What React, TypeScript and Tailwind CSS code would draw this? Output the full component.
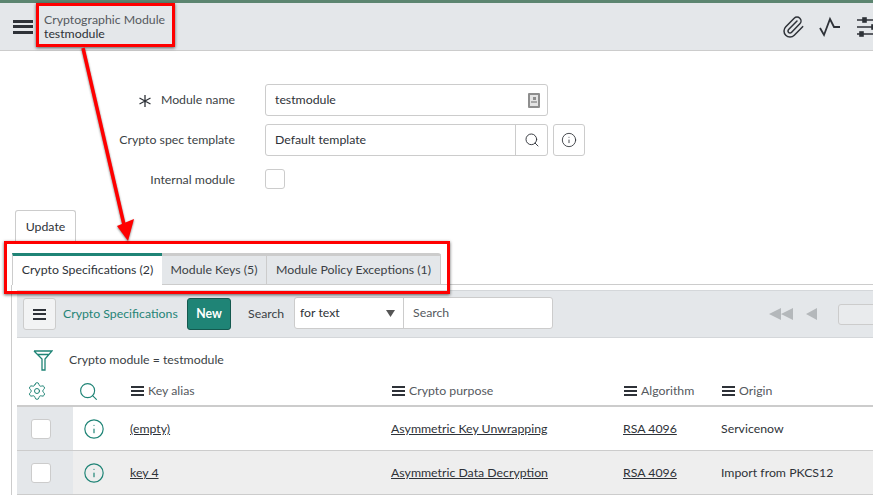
import { Paperclip, Search, Info, Settings } from 'lucide-react';

const ROWS = [
  { alias: '(empty)', purpose: 'Asymmetric Key Unwrapping', algorithm: 'RSA 4096', origin: 'Servicenow', bg: 'bg-white' },
  { alias: 'key 4', purpose: 'Asymmetric Data Decryption', algorithm: 'RSA 4096', origin: 'Import from PKCS12', bg: 'bg-[#eeeeee]' },
];

const COLUMNS = 'grid grid-cols-[56px_57px_261px_232px_98px_1fr]';

function Bars({ className }: { className: string }) {
  return (
    <span className={`flex flex-col justify-between ${className}`}>
      <span className="h-[2px] bg-[#2e3238]" />
      <span className="h-[2px] bg-[#2e3238]" />
      <span className="h-[2px] bg-[#2e3238]" />
    </span>
  );
}

function ColumnHead({ label }: { label: string }) {
  return (
    <div className="flex items-center gap-[4px] pl-px text-[#55595e]">
      <Bars className="h-[10px] w-[13px]" />
      <span>{label}</span>
    </div>
  );
}

function FormLabel({ children }: { children: React.ReactNode }) {
  return <div className="flex w-[235px] items-center justify-end pt-px text-[#3b3f45]">{children}</div>;
}

export default function App() {
  return (
    <div className="relative h-[498px] w-[873px] overflow-hidden bg-white font-['Lato','Noto_Sans',sans-serif] text-[12.3px] text-[#2e3238]">
      <div className="h-[3px] bg-[#5c8570]" />
      <header className="flex h-[48px] items-center border-b border-[#cccccc] bg-[#e4e7ea]">
        <Bars className="ml-[13px] h-[14px] w-[20px] [&>span]:h-[3px]" />
        <div className="ml-[11px] leading-[14px]">
          <div className="text-[#55595e]">Cryptographic Module</div>
          <div>testmodule</div>
        </div>
        <div className="ml-auto flex items-center">
          <Paperclip className="mr-[14px] h-[24px] w-[24px]" strokeWidth={1.5} />
          <svg className="mr-[16px] h-[22px] w-[22px]" viewBox="0 0 22 22" fill="none" stroke="#2e3238" strokeWidth="1.8">
            <path d="M1 12 L5 19 L11 3 L15 11 L21 11" />
          </svg>
          <svg className="-mr-[6px] h-[22px] w-[22px]" viewBox="0 0 22 22" fill="none" stroke="#2e3238" strokeWidth="1.6">
            <path d="M0 4H22M0 11H22M0 18H22" />
            <rect x="6" y="2" width="3" height="4" fill="#2e3238" />
            <rect x="15" y="9" width="3" height="4" fill="#2e3238" />
            <rect x="3" y="16" width="3" height="4" fill="#2e3238" />
          </svg>
        </div>
      </header>

      <form className="mt-[33px] flex flex-col">
        <div className="flex h-[32px] items-center">
          <FormLabel>
            <svg className="mr-[9px] h-[14px] w-[14px]" viewBox="0 0 14 14" fill="none" stroke="#2e3238" strokeWidth="1.3">
              <path d="M7 1V13M1.5 4L12.5 10M12.5 4L1.5 10" />
            </svg>
            Module name
          </FormLabel>
          <div className="ml-[30px] flex h-[32px] w-[283px] items-center rounded-[3px] border border-[#cccccc] pr-[7px] pl-[9px]">
            <span className="flex-1 pt-px">testmodule</span>
            <span className="flex h-[15px] w-[12px] flex-col items-center justify-center gap-px rounded-[1px] border-2 border-[#8e8e8e] bg-[#e4e4e4]">
              <span className="h-[3px] w-[3px] bg-[#8e8e8e]" />
              <span className="h-[2px] w-[6px] bg-[#a8a8a8]" />
            </span>
          </div>
        </div>
        <div className="mt-[8px] flex h-[32px] items-center">
          <FormLabel>Crypto spec template</FormLabel>
          <div className="ml-[30px] flex h-[32px] w-[283px] items-center rounded-[3px] border border-[#cccccc] pl-[9px]">
            <span className="flex-1 pt-px">Default template</span>
            <span className="flex h-full w-[32px] items-center justify-center border-l border-[#cccccc]">
              <Search className="h-[16px] w-[16px]" strokeWidth={1.4} />
            </span>
          </div>
          <span className="ml-[5px] flex h-[32px] w-[32px] items-center justify-center rounded-[3px] border border-[#cccccc]">
            <Info className="h-[16px] w-[16px]" strokeWidth={1.3} />
          </span>
        </div>
        <div className="mt-[13px] flex h-[20px] items-center">
          <FormLabel>
            <span className="pt-px">Internal module</span>
          </FormLabel>
          <span className="ml-[30px] h-[20px] w-[20px] rounded-[3px] border border-[#cccccc]" />
        </div>
      </form>

      <div className="mt-[21px] ml-[15px] flex h-[33px] w-[61px] items-center justify-center rounded-t-[3px] border border-b-0 border-[#cccccc]">
        Update
      </div>

      <div className="mt-[10px] flex h-[32px] pl-[12px]">
        <div className="flex w-[150px] items-center justify-center border-t-[3px] border-l border-[#1f8476] border-l-[#cccccc]">
          Crypto Specifications (2)
        </div>
        <div className="flex w-[105px] items-center justify-center border-t-[3px] border-r border-b border-[#cccccc] bg-[#e4e7ea] text-[#3b3f45]">
          Module Keys (5)
        </div>
        <div className="flex w-[174px] items-center justify-center rounded-tr-[3px] border-t-[3px] border-r border-b border-[#cccccc] bg-[#e4e7ea] text-[#3b3f45]">
          Module Policy Exceptions (1)
        </div>
        <div className="flex-1 border-b border-[#cccccc]" />
      </div>

      <div className="ml-[11px] border-l border-[#cccccc] pt-[5px] pl-[5px]">
        <div className="flex h-[48px] items-center border-y border-[#d4d7da] bg-[#e4e7ea] pl-[6px]">
          <span className="flex h-[32px] w-[33px] items-center justify-center rounded-[3px] border border-[#cccccc] bg-[#f2f3f4]">
            <Bars className="h-[11px] w-[13px]" />
          </span>
          <span className="ml-[7px] w-[124px] text-[#1f8476]">Crypto Specifications</span>
          <span className="flex h-[32px] w-[44px] items-center justify-center rounded-[3px] border border-[#14594f] bg-[#1f8476] font-bold text-white">
            New
          </span>
          <span className="ml-[17px] w-[46px] text-[#3b3f45]">Search</span>
          <div className="-mt-[2px] flex h-[32px] w-[259px] rounded-[3px] border border-[#cccccc] bg-white">
            <span className="flex w-[109px] items-center justify-between border-r border-[#cccccc] pr-[8px] pl-[5px]">
              for text
              <svg className="h-[7px] w-[9px]" viewBox="0 0 9 7" fill="#555555">
                <path d="M0 0H9L4.5 7Z" />
              </svg>
            </span>
            <span className="flex items-center pl-[9px] text-[#55595e]">Search</span>
          </div>
          <div className="ml-auto flex items-center">
            <svg className="h-[12px] w-[50px]" viewBox="0 0 50 12" fill="#b4b8bb">
              <path d="M0 6L12 0V12ZM12 6L24 0V12ZM37 6L48 0V12Z" />
            </svg>
            <span className="-mr-[41px] ml-[19px] h-[21px] w-[76px] rounded-[3px] border border-[#cccccc] bg-[#e9ebed]" />
          </div>
        </div>

        <div className="mt-[12px] flex h-[21px] items-center">
          <svg className="ml-[16px] h-[21px] w-[20px]" viewBox="0 0 20 21" fill="none" stroke="#1f8476" strokeWidth="1.3">
            <path d="M1 1H19L12 9V20H9V9L1 1M4.5 4.5H15.5" />
          </svg>
          <span className="ml-[16px] text-[#3b3f45]">Crypto module = testmodule</span>
        </div>

        <div className={`${COLUMNS} mt-[9px] h-[27px] items-center border-b-[2px] border-[#cccccc] pb-[3px]`}>
          <Settings className="ml-[10px] h-[20px] w-[20px] text-[#1f8476]" strokeWidth={1.2} />
          <Search className="ml-[5px] h-[21px] w-[21px] text-[#1f8476]" strokeWidth={1.3} />
          <ColumnHead label="Key alias" />
          <ColumnHead label="Crypto purpose" />
          <ColumnHead label="Algorithm" />
          <ColumnHead label="Origin" />
        </div>

        {ROWS.map((row) => (
          <div key={row.alias} className={`${COLUMNS} h-[44px] items-center border-b border-[#cccccc] ${row.bg}`}>
            <div className="flex h-full items-center bg-[#e4e7ea] pl-[14px]">
              <span className="h-[20px] w-[20px] rounded-[3px] border border-[#cccccc] bg-white" />
            </div>
            <Info className="ml-[10px] h-[22px] w-[22px] text-[#1f8476]" strokeWidth={1.3} />
            <span className="pt-px underline">{row.alias}</span>
            <span className="pt-px underline">{row.purpose}</span>
            <span className="pt-px underline">{row.algorithm}</span>
            <span className="pt-px">{row.origin}</span>
          </div>
        ))}
      </div>

      {/* red annotations drawn on top of the screenshot */}
      <div className="absolute top-[3px] left-[36px] h-[44px] w-[139px] border-[3px] border-[#ff0000] shadow-[0_1px_3px_rgba(0,0,0,0.6)]" />
      <div className="absolute top-[241px] left-[4px] h-[53px] w-[446px] border-[3px] border-[#ff0000] shadow-[0_1px_3px_rgba(0,0,0,0.6)]" />
      <svg className="absolute top-[47px] left-[70px] h-[195px] w-[70px] drop-shadow-[0_1px_1px_rgba(0,0,0,0.5)]" viewBox="0 0 70 195" fill="none">
        <path d="M13 1L55 182" stroke="#ff0000" strokeWidth="3.5" />
        <path d="M47 179L64 172L58 194Z" fill="#ff0000" />
      </svg>
    </div>
  );
}
